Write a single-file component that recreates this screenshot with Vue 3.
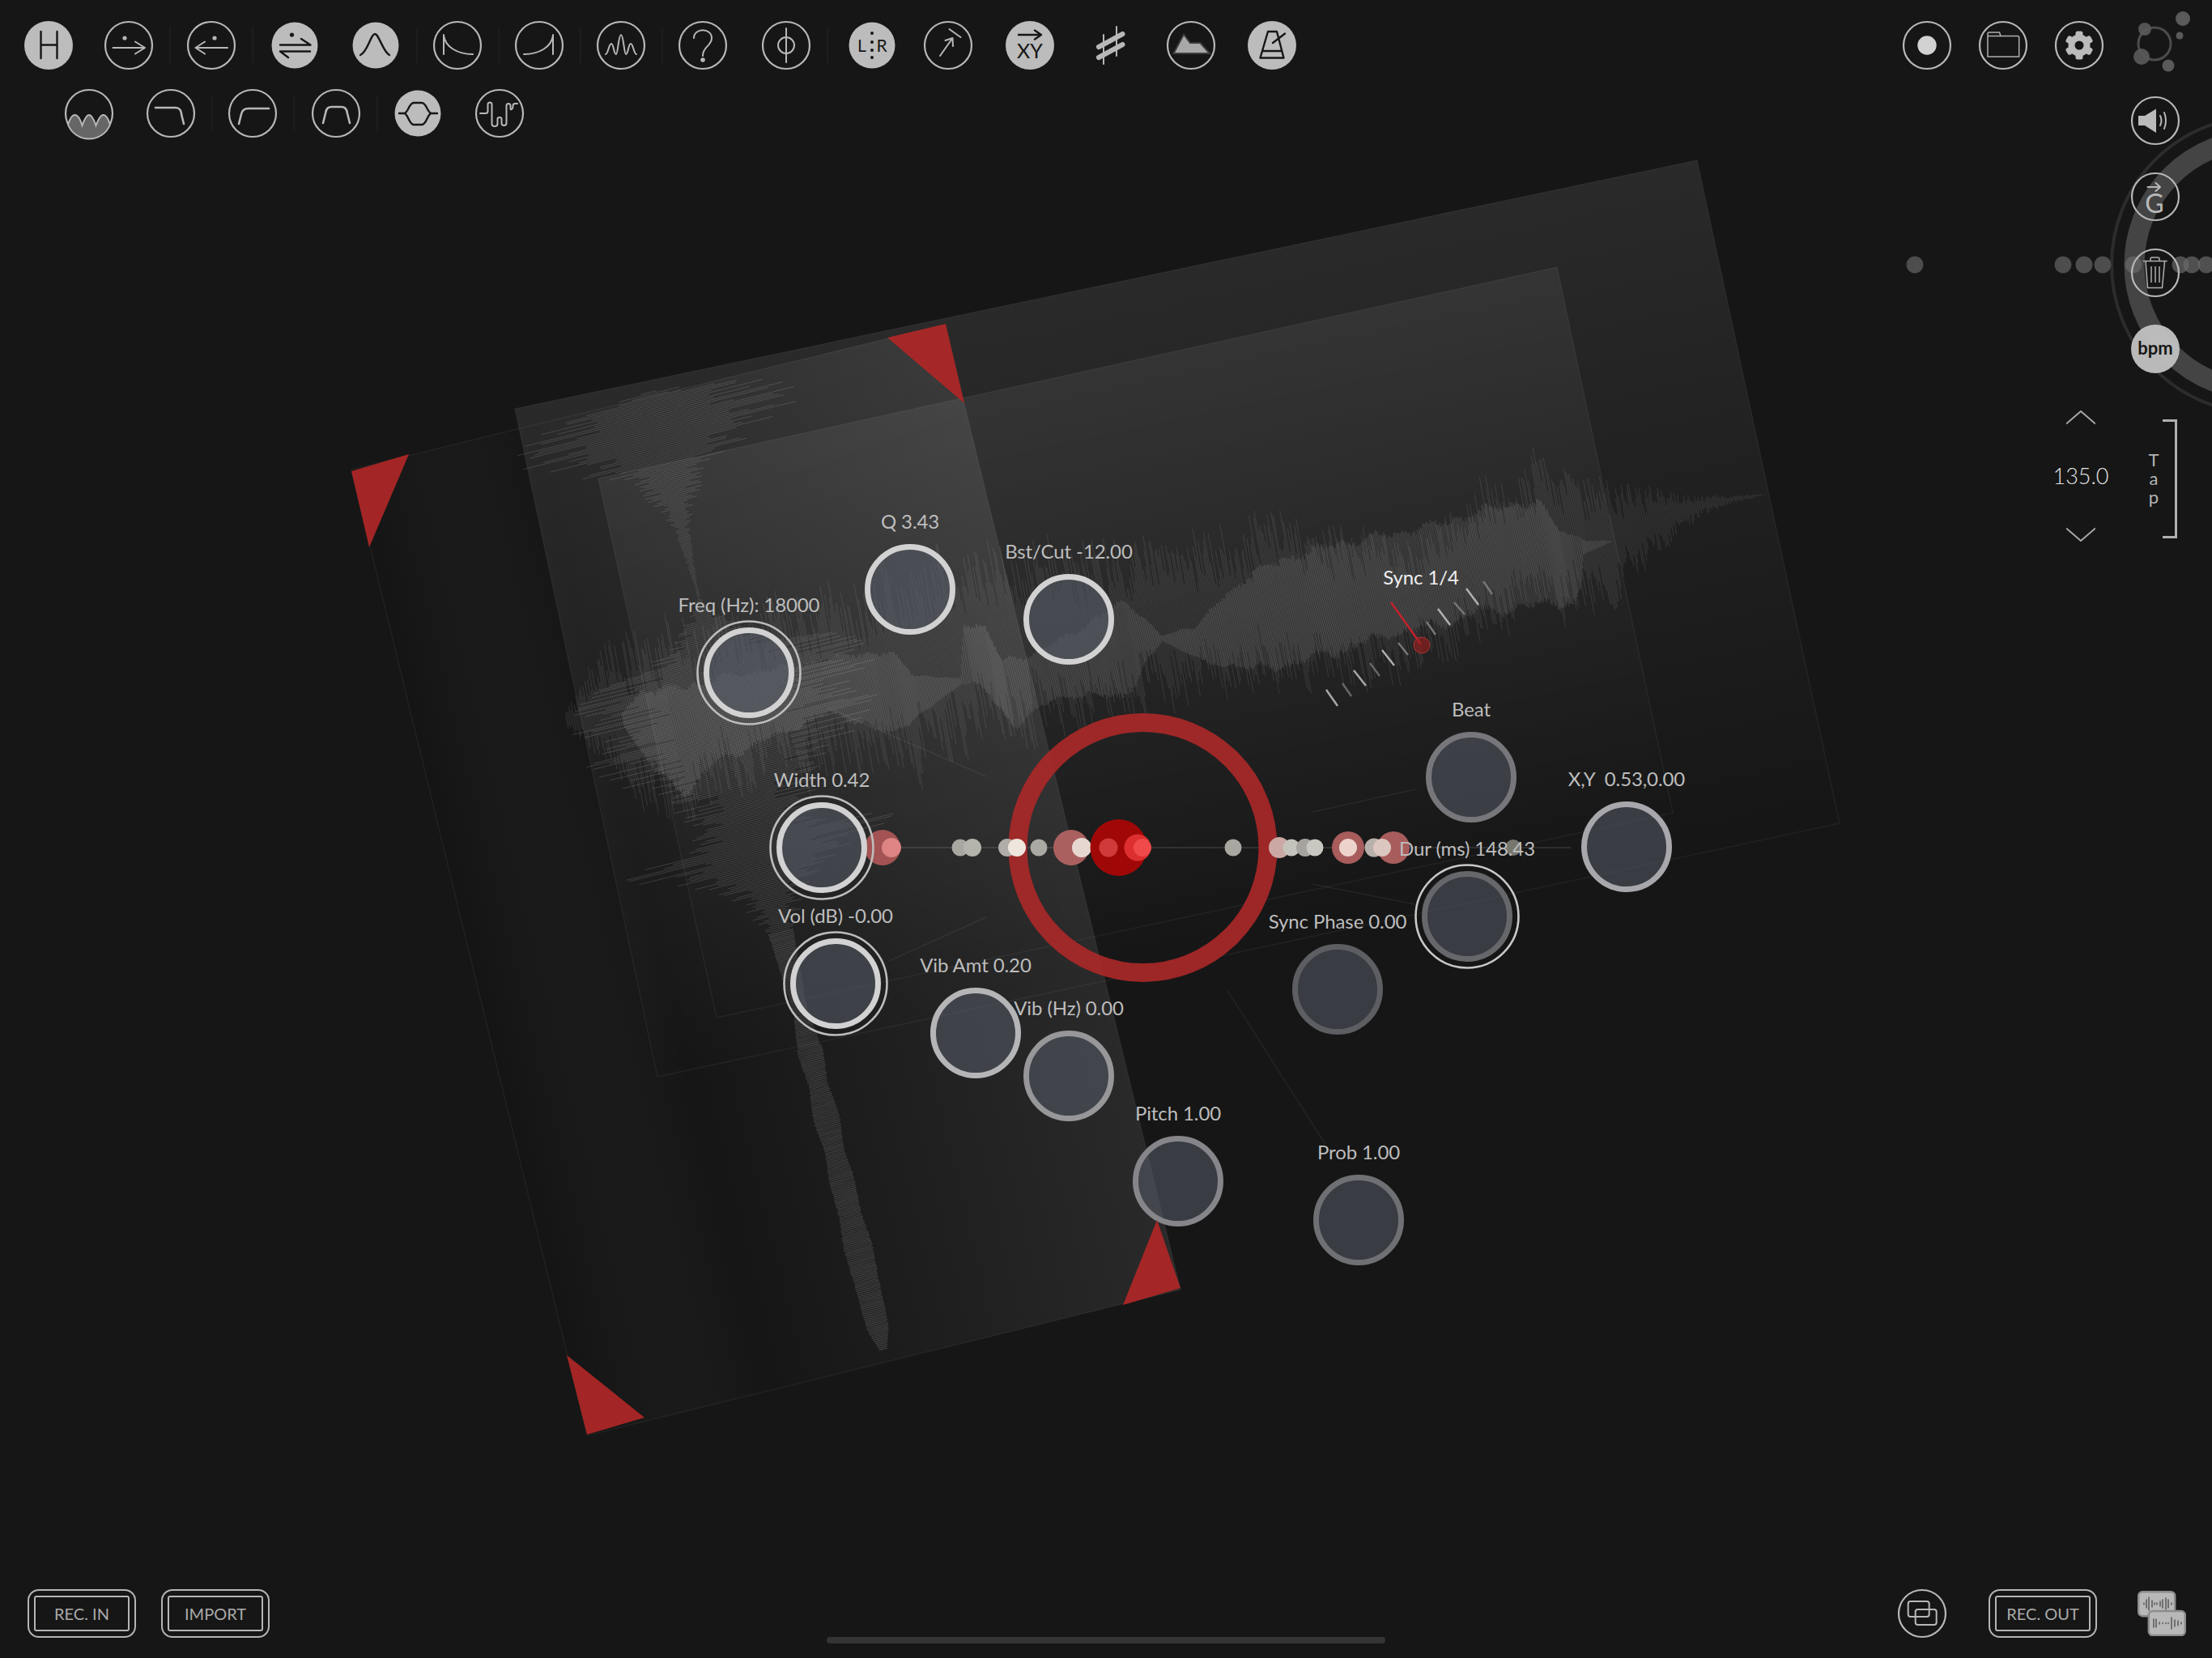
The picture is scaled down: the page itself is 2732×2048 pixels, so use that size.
<script setup>
// small seeded random so the waveforms are the same on every load
let seed = 12345
const rnd = () => {
  seed = (seed * 16807) % 2147483647
  return seed / 2147483647
}

const interp = (poly, x) => {
  for (let i = 1; i < poly.length; i++) {
    if (x <= poly[i][0]) {
      const [x0, y0] = poly[i - 1]
      const [x1, y1] = poly[i]
      return y0 + ((y1 - y0) * (x - x0)) / (x1 - x0)
    }
  }
  return poly[poly.length - 1][1]
}

// hatch between an upper and a lower outline, strokes lean like the plane
const hatch = (upper, lower, step, jitter, swell) => {
  let d = ''
  const end = upper[upper.length - 1][0]
  for (let x = upper[0][0]; x < end; x += step) {
    const up = interp(upper, x)
    const low = interp(lower, x)
    const mid = (up + low) / 2
    const slow = swell * (0.5 + 0.5 * Math.sin(x / 23) * Math.sin(x / 7.3))
    const a = up + (mid - up) * (jitter * rnd() + slow)
    const b = low - (low - mid) * (jitter * rnd() + slow)
    d += `M${(x + (a - mid) * 0.18).toFixed(1)} ${a.toFixed(1)}L${(x + (b - mid) * 0.18).toFixed(1)} ${b.toFixed(1)}`
  }
  return d
}

const solidUp = [[770, 880], [800, 845], [850, 840], [925, 825], [1000, 815], [1066, 800], [1111, 800], [1133, 830], [1187, 838], [1196, 765], [1225, 765], [1245, 810], [1290, 800], [1340, 770], [1397, 735], [1415, 755], [1435, 785], [1480, 770], [1556, 697], [1622, 672], [1673, 660], [1765, 643], [1806, 633], [1878, 612], [1913, 613], [1934, 643], [1959, 667], [1992, 668]]
const solidLow = [[770, 900], [800, 960], [834, 990], [874, 950], [940, 920], [1022, 885], [1089, 914], [1133, 887], [1187, 845], [1205, 856], [1245, 905], [1300, 865], [1384, 867], [1420, 810], [1435, 792], [1490, 825], [1556, 835], [1602, 827], [1653, 810], [1709, 793], [1801, 773], [1816, 763], [1857, 763], [1908, 753], [1934, 757], [1946, 733], [1954, 687], [1992, 668]]
const spikeUp = [[700, 880], [758, 776], [799, 758], [900, 735], [1044, 709], [1150, 680], [1244, 647], [1400, 650], [1493, 640], [1515, 643], [1612, 600], [1653, 627], [1755, 647], [1832, 590], [1916, 550], [1990, 577], [2061, 600], [2112, 610], [2184, 610]]
const spikeLow = [[700, 900], [767, 1008], [812, 1044], [888, 1003], [977, 985], [1133, 977], [1214, 932], [1263, 941], [1400, 895], [1520, 873], [1679, 870], [1867, 780], [1959, 773], [2015, 727], [2061, 673], [2112, 633], [2184, 610]]

const wavePath = hatch(solidUp, solidLow, 1.6, 0.1, 0.18)
const spikePath = hatch(spikeUp, spikeLow, 1.8, 0.6, 0.25)

// the second waveform runs down the left of the plane
const widths = [[485, 20], [500, 150], [515, 186], [540, 170], [580, 70], [600, 40], [650, 10], [700, 5], [740, 2], [790, 50], [830, 190], [880, 190], [930, 170], [960, 100], [1020, 80], [1050, 185], [1070, 100], [1100, 50], [1150, 16], [1250, 9], [1300, 16], [1340, 12], [1380, 17], [1420, 12], [1460, 16], [1500, 14], [1540, 18], [1600, 15], [1640, 14], [1667, 5]]
let downBurst = ''
let downThin = ''
for (let y = 485; y < 1667; y += 2.2) {
  const ax = 800 + (y - 480) * 0.245
  const thin = y > 1150
  const h = interp(widths, y) * (thin ? 0.9 + 0.1 * rnd() : 0.35 + 0.65 * rnd())
  const seg = `M${(ax - h).toFixed(1)} ${(y + h * 0.25).toFixed(1)}L${(ax + h).toFixed(1)} ${(y - h * 0.25).toFixed(1)}`
  if (thin) downThin += seg
  else downBurst += seg
}

const knobs = [
  { label: 'Freq (Hz): 18000', x: 925, y: 831, ring: '#d2d2d2', outer: '#bdbdbd' },
  { label: 'Q 3.43', x: 1124, y: 728, ring: '#d2d2d2' },
  { label: 'Bst/Cut -12.00', x: 1320, y: 765, ring: '#d2d2d2' },
  { label: 'Width 0.42', x: 1015, y: 1047, ring: '#d2d2d2', outer: '#bdbdbd' },
  { label: 'Vol (dB) -0.00', x: 1032, y: 1215, ring: '#d2d2d2', outer: '#bdbdbd' },
  { label: 'Vib Amt 0.20', x: 1205, y: 1276, ring: '#b5b5b8' },
  { label: 'Vib (Hz) 0.00', x: 1320, y: 1329, ring: '#97979a' },
  { label: 'Pitch 1.00', x: 1455, y: 1459, ring: '#85858a' },
  { label: 'Prob 1.00', x: 1678, y: 1507, ring: '#6f7074' },
  { label: 'Sync Phase 0.00', x: 1652, y: 1222, ring: '#5d5e62' },
  { label: 'Dur (ms) 148.43', x: 1812, y: 1132, ring: '#66676b', outer: '#c8c8c8' },
  { label: 'Beat', x: 1817, y: 960, ring: '#77777b' },
  { label: 'X,Y  0.53,0.00', x: 2009, y: 1046, ring: '#a8a8ac' }
]

const dots = [
  { x: 1090, r: 22, c: '#a35353' }, { x: 1101, r: 12, c: '#de8484' },
  { x: 1186, r: 10.5, c: '#a8a8a0' }, { x: 1201, r: 11, c: '#b4b4ac' },
  { x: 1244, r: 11, c: '#b0aca8' }, { x: 1256, r: 11, c: '#eee6dc' },
  { x: 1283, r: 10.5, c: '#aaaaa2' },
  { x: 1323, r: 22, c: '#ab6060' }, { x: 1336, r: 12, c: '#e6d8d0' },
  { x: 1381.5, r: 35, c: '#a00808' },
  { x: 1369, r: 11.5, c: '#d03a3a' }, { x: 1405, r: 16.5, c: '#dd2f2f' }, { x: 1411, r: 11, c: '#f04a4a' },
  { x: 1523, r: 10.5, c: '#a8a8a0' },
  { x: 1580, r: 13, c: '#cca8a4' }, { x: 1595, r: 10.5, c: '#c4c4bc' },
  { x: 1612, r: 11, c: '#a6a29e' }, { x: 1624, r: 10.5, c: '#c8c8c0' },
  { x: 1665, r: 20, c: '#a85c5c' }, { x: 1665, r: 11, c: '#ecd4cc' },
  { x: 1721, r: 20, c: '#a85c5c' }, { x: 1697, r: 11.5, c: '#b8b0aa' }, { x: 1707, r: 11, c: '#dcc6c0' },
  { x: 1869, r: 10, c: '#77776f' }
]

// sync ruler, bright and dim ticks alternate
const ticks = [
  [1638, 852, 1652, 872, '#a8a8a8'], [1658, 844, 1669, 860, '#666'],
  [1672, 828, 1687, 847, '#a8a8a8'], [1692, 819, 1704, 835, '#666'],
  [1707, 803, 1722, 822, '#b0b0b0'], [1727, 794, 1739, 809, '#777'],
  [1762, 768, 1773, 784, '#777'], [1776, 752, 1791, 772, '#b0b0b0'],
  [1796, 744, 1809, 759, '#777'], [1811, 727, 1826, 747, '#b0b0b0'],
  [1832, 718, 1843, 734, '#777']
]

const sideDots = [2365, 2548, 2574, 2597]
const sideDotsLight = [2635, 2693, 2707, 2725]
</script>

<template>
  <div class="screen">
    <svg class="canvas" width="2732" height="2048" viewBox="0 0 2732 2048">
      <defs>
        <linearGradient id="panelA" gradientUnits="userSpaceOnUse" x1="1366" y1="351" x2="1542" y2="1173">
          <stop offset="0" stop-color="#fff" stop-opacity="0.085" />
          <stop offset="1" stop-color="#fff" stop-opacity="0" />
        </linearGradient>
        <linearGradient id="panelB" gradientUnits="userSpaceOnUse" x1="1331" y1="460" x2="1475" y2="1130">
          <stop offset="0" stop-color="#fff" stop-opacity="0.06" />
          <stop offset="1" stop-color="#fff" stop-opacity="0" />
        </linearGradient>
        <linearGradient id="panelC" gradientUnits="userSpaceOnUse" x1="580" y1="1177" x2="1312" y2="997">
          <stop offset="0" stop-color="#000" stop-opacity="0.07" />
          <stop offset="0.3" stop-color="#fff" stop-opacity="0" />
          <stop offset="1" stop-color="#fff" stop-opacity="0.085" />
        </linearGradient>
      </defs>

      <!-- ghost of the second ring, right edge -->
      <circle cx="2791" cy="327" r="183" class="ghost-thin" />
      <circle cx="2791" cy="327" r="155" class="ghost-thick" />
      <circle v-for="x in sideDots" :key="x" :cx="x" cy="327" r="10.5" fill="#4d4d4d" />
      <circle v-for="x in sideDotsLight" :key="x" :cx="x" cy="327" r="10.5" fill="#6a6a6a" fill-opacity="0.7" />

      <!-- tilted planes -->
      <polygon points="434,580 1167,401 1458,1593 725,1773" fill="url(#panelC)" class="edge" />
      <polygon points="636,505 2096,198 2272,1017 812,1330" fill="url(#panelA)" class="edge" />
      <polygon points="739,591 1923,330 2066,1004 885,1257" fill="url(#panelB)" class="edge" />

      <path :d="downBurst" class="wave-burst" />
      <path :d="downThin" class="wave-thin" />
      <path :d="spikePath" class="wave-spike" />
      <path :d="wavePath" class="wave-solid" />

      <line x1="1022" y1="874" x2="1218" y2="959" class="faint" />
      <line x1="1098" y1="1187" x2="1218" y2="1133" class="faint" />
      <line x1="1621" y1="1003" x2="1748" y2="975" class="faint" />
      <line x1="1621" y1="1092" x2="1748" y2="1117" class="faint" />
      <line x1="1515" y1="1222" x2="1636" y2="1412" class="faint" />
      <line x1="1090" y1="1047" x2="1940" y2="1047" class="axis" />

      <!-- big ring and the grain dots -->
      <circle cx="1411.5" cy="1047" r="154.5" class="play-ring" />
      <circle v-for="(d, i) in dots" :key="i" :cx="d.x" cy="1047" :r="d.r" :fill="d.c" />

      <line v-for="(t, i) in ticks" :key="'t' + i" :x1="t[0]" :y1="t[1]" :x2="t[2]" :y2="t[3]" :stroke="t[4]" stroke-width="2.5" />
      <line x1="1718" y1="744" x2="1755" y2="796" class="needle" />
      <circle cx="1756" cy="797" r="10" class="needle-dot" />
      <text x="1755" y="722" class="lbl lbl-on">Sync 1/4</text>

      <g v-for="k in knobs" :key="k.label">
        <circle :cx="k.x" :cy="k.y" r="52.5" class="knob" :stroke="k.ring" />
        <circle v-if="k.outer" :cx="k.x" :cy="k.y" r="63.5" class="knob-outer" :stroke="k.outer" />
        <text :x="k.x" :y="k.y - 75" class="lbl">{{ k.label }}</text>
      </g>

      <polygon points="434,582 505,561 456,676" class="tri" />
      <polygon points="1096,417 1168,400 1191,498" class="tri" />
      <polygon points="1387,1612 1429,1507 1458,1591" class="tri" />
      <polygon points="700,1674 725,1772 796,1751" class="tri" />
    </svg>

    <div class="top">
      <div class="toolbars">
        <div class="bar">
          <span class="cell">
            <svg class="ic" viewBox="0 0 60 60"><circle cx="30" cy="30" r="30" class="disc" /><path d="M20.5 13V46M40.5 13V46M20.5 29.5H40.5" class="dk" /></svg>
          </span>
          <span class="cell sep n-2">
            <svg class="ic" viewBox="0 0 60 60"><circle cx="30" cy="30" r="29" class="ring" /><circle cx="25" cy="21" r="2.6" class="dot" /><path d="M10.5 33H50M38 25.5L50 33L38 40.5" class="ln" /></svg>
          </span>
          <span class="cell sep n1">
            <svg class="ic" viewBox="0 0 60 60"><circle cx="30" cy="30" r="29" class="ring" /><circle cx="34" cy="21" r="2.6" class="dot" /><path d="M50 33H10.5M22 25.5L10.5 33L22 40.5" class="ln" /></svg>
          </span>
          <span class="cell n2">
            <svg class="ic" viewBox="0 0 60 60"><circle cx="30" cy="30" r="28.5" class="disc" /><circle cx="26.5" cy="17" r="2.6" class="dk-dot" /><path d="M12 29.5H49.5L38 22M49 37.5H12L22 45" class="dk" /></svg>
          </span>
          <span class="cell sep n-1">
            <svg class="ic" viewBox="0 0 60 60"><circle cx="30" cy="30" r="28.5" class="disc" /><path d="M11 42C20 38 24 16 29 16C34 16 39 38 47 42" class="dk" /></svg>
          </span>
          <span class="cell sep">
            <svg class="ic" viewBox="0 0 60 60"><circle cx="30" cy="30" r="29" class="ring" /><path d="M13 17V41M13 18C15 32 30 41 49 41" class="ln" /></svg>
          </span>
          <span class="cell sep">
            <svg class="ic" viewBox="0 0 60 60"><circle cx="30" cy="30" r="29" class="ring" /><path d="M47 17V41M47 18C45 32 30 41 11 41" class="ln" /></svg>
          </span>
          <span class="cell sep">
            <svg class="ic" viewBox="0 0 60 60"><circle cx="30" cy="30" r="29" class="ring" /><path d="M11 41C14 41 15 28 18 28C21 28 21 41 24 41C26 41 27 17 30 17C33 17 34 41 36 41C39 41 39 28 42 28C45 28 46 41 49 41" class="ln" /></svg>
          </span>
          <span class="cell">
            <svg class="ic" viewBox="0 0 60 60"><circle cx="30" cy="30" r="29" class="ring" /><path d="M19 21C19 8 41 8 41 21C41 31 30 31 30 43" class="ln" /><circle cx="30" cy="48" r="2.8" class="dot" /></svg>
          </span>
          <span class="cell sep n2">
            <svg class="ic" viewBox="0 0 60 60"><circle cx="30" cy="30" r="29" class="ring" /><path d="M30 9V51" class="ln" /><circle cx="30" cy="30" r="10" class="ln" /></svg>
          </span>
          <span class="cell n4">
            <svg class="ic" viewBox="0 0 60 60">
              <circle cx="30" cy="30" r="28.5" class="disc" />
              <circle cx="30" cy="15" r="2" class="dk-dot" /><circle cx="30" cy="26" r="2" class="dk-dot" /><circle cx="30" cy="36" r="2" class="dk-dot" /><circle cx="30" cy="45" r="2" class="dk-dot" />
              <text x="17.5" y="38" class="ic-text">L</text><text x="42" y="38" class="ic-text">R</text>
            </svg>
          </span>
          <span class="cell n-6">
            <svg class="ic" viewBox="0 0 60 60"><circle cx="30" cy="30" r="29" class="ring" /><path d="M20 43L35.5 21M26.5 24L35.5 21L36 31M31.5 10L45.5 20" class="ln" /></svg>
          </span>
          <span class="cell">
            <svg class="ic" viewBox="0 0 60 60"><circle cx="30" cy="30" r="30" class="disc" /><path d="M16 17H44M36 11.5L44 17L36 22.5" class="dk" /><text x="30" y="46" class="ic-text xy">XY</text></svg>
          </span>
          <span class="cell n-2">
            <svg class="ic" viewBox="0 0 60 60"><path d="M22 17V53M38 7V43" class="ln" /><path d="M16 32L45.5 16M16 45L45.5 29" class="hash" /></svg>
          </span>
          <span class="cell n-1">
            <svg class="ic" viewBox="0 0 60 60"><circle cx="30" cy="30" r="29" class="ring" /><path d="M8.5 40L21 16.5L29 27H41.5L53 40Z" class="peak" /></svg>
          </span>
          <span class="cell n-1">
            <svg class="ic" viewBox="0 0 60 60"><circle cx="30" cy="30" r="30" class="disc" /><path d="M25 13H36L44.5 45.5H15.5ZM18 37H42M31 27L46 15.5" class="dk" /></svg>
          </span>
        </div>

        <div class="bar bar-second">
          <span class="cell">
            <svg class="ic" viewBox="0 0 60 60"><circle cx="30" cy="30" r="29" class="ring" /><path d="M4 44Q8 31 13 32Q18 33 21.5 45Q26 32 30 32Q34 32 38.5 45Q43 33 47 32Q52 31 56 44A28 28 0 0 1 4 44Z" class="wave-fill" /></svg>
          </span>
          <span class="cell sep">
            <svg class="ic" viewBox="0 0 60 60"><circle cx="30" cy="30" r="29" class="ring" /><path d="M11 23H36C42 23 43 28 43.5 33L46 43" class="ln wide" /></svg>
          </span>
          <span class="cell sep">
            <svg class="ic" viewBox="0 0 60 60"><circle cx="30" cy="30" r="29" class="ring" /><path d="M13 43L16 31C17 26 20 24 25 24H50" class="ln wide" /></svg>
          </span>
          <span class="cell sep n2">
            <svg class="ic" viewBox="0 0 60 60"><circle cx="30" cy="30" r="29" class="ring" /><path d="M14 42L17 30C18 24 20 22 25 22H36C41 22 43 24 44 30L47 42" class="ln wide" /></svg>
          </span>
          <span class="cell">
            <svg class="ic" viewBox="0 0 60 60"><circle cx="30" cy="30" r="28.5" class="disc" /><path d="M7 30H13C18 30 19 17 25 17H35C41 17 42 30 47 30H54M13 30C18 30 19 44 25 44H35C41 44 42 30 47 30" class="dk" /></svg>
          </span>
          <span class="cell">
            <svg class="ic" viewBox="0 0 60 60"><circle cx="30" cy="30" r="29" class="ring" /><path d="M6 30H13Q15.5 30 15.5 27V19Q15.5 16.5 18 16.5Q20.5 16.5 20.5 19V43Q20.5 46 24 46Q27.5 46 27.5 43V37Q27.5 35 30 35Q32.5 35 32.5 37V42Q32.5 45 35.5 45Q38.5 45 38.5 42V21Q38.5 18 41 18Q43.5 18 43.5 21V24Q43.5 26 45 25Q46.5 24 46.5 21Q46.5 18 49 18H52" class="ln" /></svg>
          </span>
        </div>
      </div>

      <div class="side">
        <div class="sys">
          <svg class="ic" viewBox="0 0 60 60"><circle cx="30" cy="30" r="29" class="ring" /><circle cx="30" cy="30" r="11.7" fill="#d2d2d2" /></svg>
          <svg class="ic" viewBox="0 0 60 60"><circle cx="30" cy="30" r="29" class="ring" /><path d="M11 44V15.5Q11 14 12.5 14H25.5L27 18.5H48Q49.7 18.5 49.7 20V44Z" class="thin" /><path d="M11 18.5H27" class="thin" /></svg>
          <svg class="ic" viewBox="0 0 60 60">
            <circle cx="30" cy="30" r="29" class="ring" />
            <g fill="#bbb">
              <circle cx="30" cy="30" r="13.5" />
              <rect x="25.5" y="12.5" width="9" height="35" rx="2.5" />
              <rect x="25.5" y="12.5" width="9" height="35" rx="2.5" transform="rotate(60 30 30)" />
              <rect x="25.5" y="12.5" width="9" height="35" rx="2.5" transform="rotate(120 30 30)" />
            </g>
            <circle cx="30" cy="30" r="5.5" fill="#161616" />
          </svg>
          <svg class="ic logo" viewBox="0 0 60 60">
            <circle cx="29" cy="28" r="20" fill="none" stroke="#4c4c4c" stroke-width="3" />
            <circle cx="64" cy="-3" r="9" fill="#5a5a5a" />
            <circle cx="60" cy="18" r="4.5" fill="#5a5a5a" />
            <circle cx="46" cy="55" r="7.5" fill="#5a5a5a" />
            <circle cx="13" cy="44" r="10" fill="#5a5a5a" fill-opacity="0.9" />
            <circle cx="17" cy="10" r="8" fill="#5a5a5a" fill-opacity="0.9" />
          </svg>
        </div>

        <div class="side-col">
          <svg class="ic" viewBox="0 0 60 60"><circle cx="30" cy="30" r="29" class="ring" /><path d="M9 24H17L31 15.5V45L17 36H9Z" fill="#bbb" /><path d="M36 24Q39 30 36 36M41 20Q45 30 41 40" class="ln" /></svg>
          <svg class="ic" viewBox="0 0 60 60"><circle cx="30" cy="30" r="29" class="ring" /><path d="M20.5 18H36M30.5 13L36 18L30.5 23" class="ln" /><text x="29" y="50" class="ic-g">G</text></svg>
          <svg class="ic" viewBox="0 0 60 60">
            <circle cx="30" cy="30" r="29" class="ring" />
            <path d="M14.7 15.6H44.7M24 15.6V13Q24 11 26 11H33Q35 11 35 13V15.6M18 16L20.5 48.5H38.5L41.5 16M25 22V42M30 22V42M35 22V42" class="thin" />
          </svg>
          <svg class="ic" viewBox="0 0 60 60"><circle cx="30" cy="30" r="30" fill="#c2c2c2" fill-opacity="0.95" /><text x="30" y="37" class="ic-bpm">bpm</text></svg>
        </div>

        <div class="tempo">
          <div class="stepper">
            <svg class="chev" viewBox="0 0 36 18"><path d="M0 16.5L18 1L36 16.5" /></svg>
            <div class="bpm-val">135.0</div>
            <svg class="chev" viewBox="0 0 36 18"><path d="M0 1.5L18 17L36 1.5" /></svg>
          </div>
          <div class="tap-letters"><span>T</span><span>a</span><span>p</span></div>
          <div class="tap-bracket"></div>
        </div>
      </div>
    </div>

    <div class="bottom">
      <div class="group-left">
        <div class="rec-btn"><div class="rec-inner">REC. IN</div></div>
        <div class="rec-btn"><div class="rec-inner">IMPORT</div></div>
      </div>
      <div class="group-right">
        <svg class="ic" viewBox="0 0 60 60">
          <circle cx="30" cy="30" r="29" class="ring" />
          <rect x="12.7" y="15" width="26" height="19" rx="3" class="ln" />
          <rect x="21.7" y="25" width="26" height="19" rx="3" class="ln" />
        </svg>
        <div class="rec-btn"><div class="rec-inner">REC. OUT</div></div>
        <svg class="clips" viewBox="0 0 60 56">
          <rect x="1.2" y="1.2" width="45" height="30" rx="5" class="clip" />
          <path d="M8 15V17M11 11V21M14 8V24M18 12V20M21 15V17M24 15V17M28 13V19M31 11V21M35 9V23M38 11V21M42 15V17" class="clip-bars" />
          <rect x="13.8" y="25" width="45" height="30" rx="5" class="clip" />
          <path d="M20 35V45M23 35V45M27 39V41M31 39.5V40.5M35 39.5V40.5M38 39.5V40.5M42 33V47M46 36V44M50 37V43M54 39V41" class="clip-bars" />
        </svg>
      </div>
    </div>

    <div class="home-bar"></div>
  </div>
</template>

<style>
html,
body {
  background: #161616;
}
</style>

<style scoped>
.screen {
  position: relative;
  width: 2732px;
  height: 2048px;
  background: #161616;
  overflow: hidden;
  display: flex;
  flex-direction: column;
  justify-content: space-between;
  font-family: Lato, "Open Sans", sans-serif;
}

.canvas {
  position: absolute;
  left: 0;
  top: 0;
}

.top {
  position: relative;
  display: flex;
  justify-content: space-between;
  padding: 26px 40px 0 30px;
}

.toolbars {
  display: flex;
  flex-direction: column;
  gap: 24px;
}

.bar {
  display: flex;
  gap: 41px;
}

.bar-second {
  margin-left: 50px;
}

.cell {
  position: relative;
  display: block;
  width: 60px;
  height: 60px;
}

.cell.sep::after {
  content: "";
  position: absolute;
  right: -22px;
  top: 8px;
  width: 2px;
  height: 44px;
  background: #1d1d1d;
}

.n-6 { margin-left: -6.5px; }
.n-2 { margin-left: -2px; }
.n-1 { margin-left: -1px; }
.n1 { margin-left: 1px; }
.n2 { margin-left: 2px; }
.n4 { margin-left: 4.5px; }

.ic {
  display: block;
  width: 60px;
  height: 60px;
  overflow: visible;
}

.ring {
  fill: none;
  stroke: #b8b8b8;
  stroke-width: 2.2;
}

.disc {
  fill: #bcbcbc;
}

.dot {
  fill: #b8b8b8;
}

.dk-dot {
  fill: #161616;
}

.ln {
  fill: none;
  stroke: #b8b8b8;
  stroke-width: 2;
  stroke-linecap: round;
  stroke-linejoin: round;
}

.ln.wide {
  stroke-width: 2.6;
}

.thin {
  fill: none;
  stroke: #b0b0b0;
  stroke-width: 1.5;
}

.dk {
  fill: none;
  stroke: #161616;
  stroke-width: 2.4;
  stroke-linecap: round;
  stroke-linejoin: round;
}

.hash {
  fill: none;
  stroke: #b8b8b8;
  stroke-width: 6;
  stroke-linecap: round;
}

.peak {
  fill: #a8a8a8;
  stroke: #3c3c3c;
  stroke-width: 2;
}

.wave-fill {
  fill: #666;
  stroke: #b8b8b8;
  stroke-width: 2;
}

.ic-text {
  font-size: 21px;
  font-weight: 400;
  fill: #161616;
  text-anchor: middle;
}

.ic-text.xy {
  font-size: 25px;
}

.ic-g {
  font-size: 32px;
  font-weight: 400;
  fill: #b8b8b8;
  text-anchor: middle;
}

.ic-bpm {
  font-size: 22px;
  font-weight: 700;
  fill: #161616;
  text-anchor: middle;
}

.side {
  display: flex;
  flex-direction: column;
  align-items: flex-end;
}

.sys {
  display: flex;
  gap: 34px;
}

.side-col {
  display: flex;
  flex-direction: column;
  gap: 34px;
  margin-top: 33px;
}

.tempo {
  display: flex;
  align-items: flex-start;
  margin-top: 46px;
  margin-right: 3px;
}

.stepper {
  width: 80px;
  height: 162px;
  display: flex;
  flex-direction: column;
  align-items: center;
  justify-content: space-between;
  margin-right: 40px;
}

.chev {
  width: 36px;
  height: 18px;
  fill: none;
  stroke: #a8a8a8;
  stroke-width: 2;
}

.bpm-val {
  font-size: 27px;
  font-weight: 300;
  color: #e2e2e2;
  line-height: 36px;
}

.tap-letters {
  width: 20px;
  margin-top: 49px;
  display: flex;
  flex-direction: column;
  align-items: center;
  font-size: 22px;
  line-height: 23px;
  color: #b4b4b4;
}

.tap-bracket {
  width: 18px;
  height: 147px;
  margin-top: 11px;
  margin-left: 1px;
  box-sizing: border-box;
  border: 3px solid #b0b0b0;
  border-left: 0;
}

.bottom {
  position: relative;
  display: flex;
  justify-content: space-between;
  align-items: center;
  padding: 0 32px 25px 34px;
}

.group-left {
  display: flex;
  gap: 31px;
}

.group-right {
  display: flex;
  align-items: center;
  gap: 52px;
}

.rec-btn {
  width: 134px;
  height: 60px;
  box-sizing: border-box;
  padding: 6px;
  border: 2.5px solid #b5b5b5;
  border-radius: 14px;
}

.rec-inner {
  height: 100%;
  box-sizing: border-box;
  border: 2.5px solid #b5b5b5;
  border-radius: 3px;
  display: flex;
  align-items: center;
  justify-content: center;
  font-size: 20px;
  color: #aaa;
  white-space: nowrap;
}

.clips {
  display: block;
  width: 60px;
  height: 56px;
  margin-left: -2px;
}

.clip {
  fill: #b8b8b8;
  stroke: #8c8c8c;
  stroke-width: 2.4;
}

.clip-bars {
  fill: none;
  stroke: #4a4a4a;
  stroke-width: 1.3;
  stroke-linecap: round;
}

.home-bar {
  position: absolute;
  left: 1021px;
  top: 2022px;
  width: 690px;
  height: 8px;
  border-radius: 4px;
  background: #343434;
}

/* canvas */
.ghost-thin {
  fill: none;
  stroke: #2c2c2c;
  stroke-width: 4;
}

.ghost-thick {
  fill: none;
  stroke: #444;
  stroke-width: 25;
}

.edge {
  stroke: rgba(255, 255, 255, 0.05);
  stroke-width: 1.5;
}

.wave-solid {
  fill: none;
  stroke: rgba(255, 255, 255, 0.11);
  stroke-width: 1.2;
}

.wave-spike {
  fill: none;
  stroke: rgba(255, 255, 255, 0.1);
  stroke-width: 1;
}

.wave-burst {
  fill: none;
  stroke: rgba(255, 255, 255, 0.14);
  stroke-width: 1;
}

.wave-thin {
  fill: none;
  stroke: rgba(255, 255, 255, 0.15);
  stroke-width: 1.4;
}

.faint {
  stroke: rgba(255, 255, 255, 0.06);
  stroke-width: 1.5;
}

.axis {
  stroke: rgba(255, 255, 255, 0.1);
  stroke-width: 2;
}

.play-ring {
  fill: none;
  stroke: rgba(172, 40, 40, 0.9);
  stroke-width: 23;
}

.needle {
  stroke: #c4202c;
  stroke-width: 2.5;
}

.needle-dot {
  fill: rgba(150, 30, 30, 0.65);
  stroke: #a33;
  stroke-width: 1;
}

.knob {
  fill: rgba(88, 92, 104, 0.55);
  stroke-width: 7;
}

.knob-outer {
  fill: none;
  stroke-width: 2.6;
}

.lbl {
  font-size: 24px;
  letter-spacing: -0.1px;
  fill: #bdbdbd;
  text-anchor: middle;
  white-space: pre;
}

.lbl-on {
  fill: #efefef;
}

.tri {
  fill: #a92626;
  opacity: 0.97;
}
</style>
